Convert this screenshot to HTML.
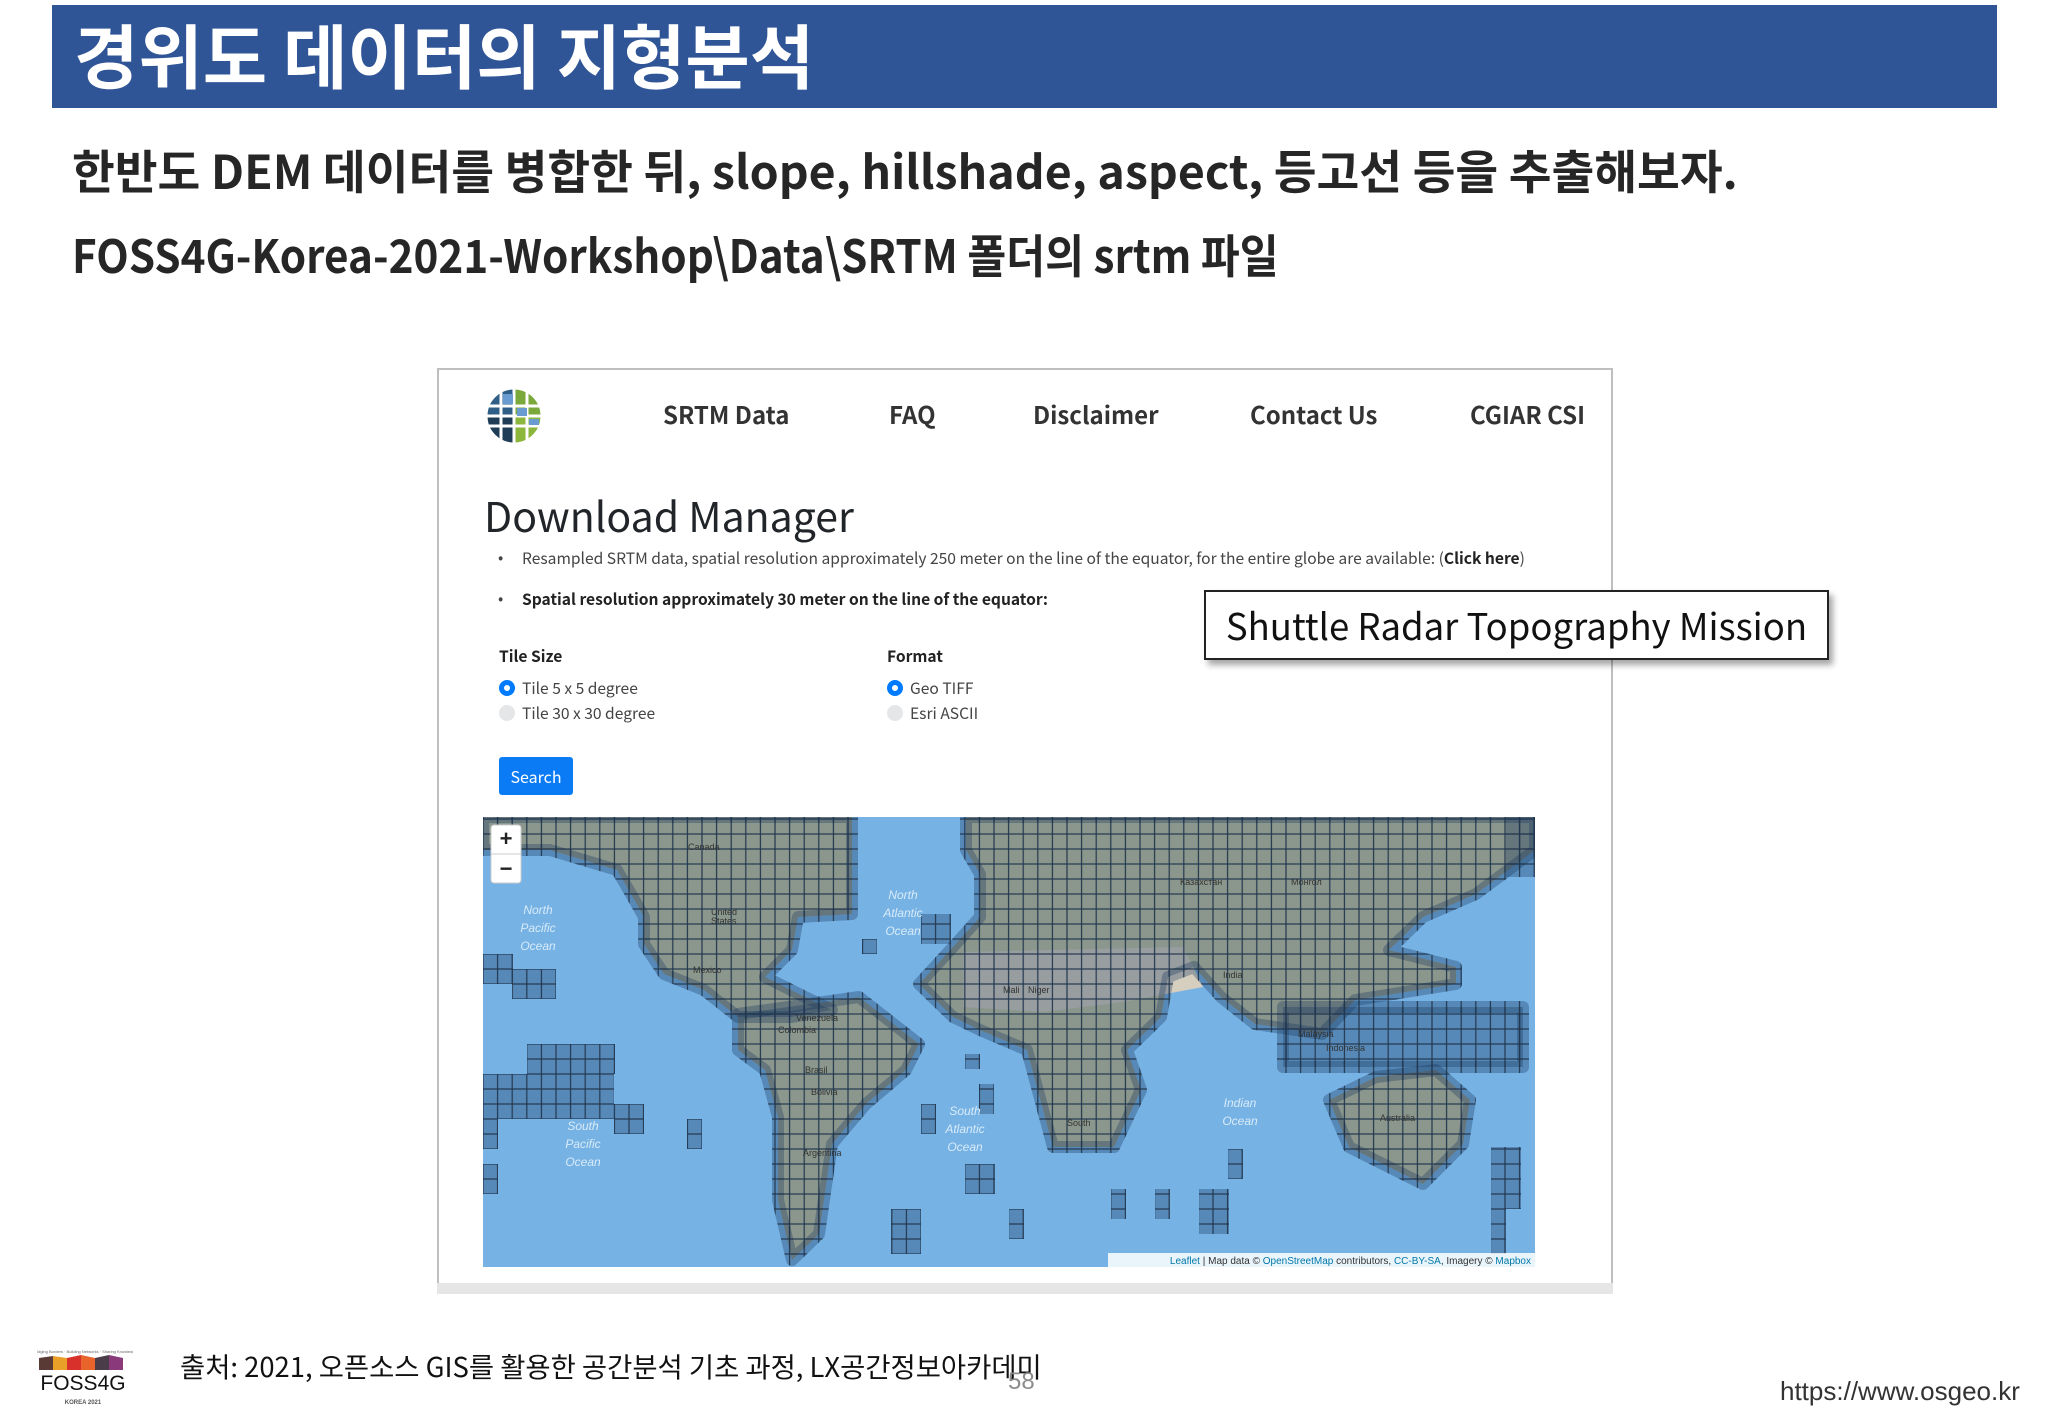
<!DOCTYPE html>
<html><head><meta charset="utf-8"><style>
*{margin:0;padding:0;box-sizing:border-box}
body{width:2048px;height:1418px;background:#fff;position:relative;overflow:hidden;font-family:"Liberation Sans","Noto Sans CJK KR",sans-serif}
.abs{position:absolute;white-space:nowrap}
.hdr{left:52px;top:5px;width:1945px;height:103px;background:#2f5597}
.kr{font-family:"Noto Sans CJK KR","Liberation Sans",sans-serif}
.title{left:74px;top:10px;font-size:70px;font-weight:700;color:#fff;line-height:88px}
.l2{left:72px;top:138px;font-size:46.5px;font-weight:700;color:#262626;line-height:64px}
.l3{left:72px;top:222px;font-size:46px;font-weight:700;color:#262626;line-height:64px;transform:scaleX(0.918);transform-origin:0 0}
.box{left:437px;top:368px;width:1176px;height:926px;border:2px solid #bfbfbf;background:#fff}
.nav{top:396px;font-size:24px;font-weight:700;color:#333;font-family:"Noto Sans CJK KR","Liberation Sans",sans-serif}
.dm{left:484px;top:486px;font-size:41px;color:#212529;font-family:"Noto Sans CJK KR",sans-serif;line-height:56px}
.sm{font-size:15.6px;color:#444;font-family:"Noto Sans CJK KR",sans-serif;line-height:22px}
.radio{width:16px;height:16px;border-radius:50%}
.on{border:5px solid #007bff;background:#fff}
.off{background:#e4e6e8}
.btn{left:499px;top:757px;width:74px;height:38px;background:#0a7bf5;border-radius:3px;color:#fff;font-size:16px;text-align:center;line-height:38px;font-family:"Noto Sans CJK KR",sans-serif}
.call{left:1204px;top:590px;width:625px;height:70px;border:2px solid #222;background:#fff;box-shadow:4px 5px 6px rgba(0,0,0,.35);font-size:36.5px;color:#111;text-align:center;line-height:66px;font-family:"Noto Sans CJK KR",sans-serif}
</style></head><body>
<div class="abs hdr"></div>
<div class="abs title kr">경위도 데이터의 지형분석</div>
<div class="abs l2 kr">한반도 DEM 데이터를 병합한 뒤, slope, hillshade, aspect, 등고선 등을 추출해보자.</div>
<div class="abs l3 kr">FOSS4G-Korea-2021-Workshop\Data\SRTM 폴더의 srtm 파일</div>

<div class="abs box"></div>
<div class="abs" style="left:437px;top:1283px;width:1176px;height:11px;background:#e6e6e6"></div>
<svg class="abs" style="left:483px;top:386px" width="64" height="60" viewBox="0 0 64 60">
<circle cx="31" cy="30" r="28" fill="#fff"/>
<g stroke="#fff" stroke-width="3">
<path d="M3 30 A28 28 0 0 1 31 2 L31 30Z" fill="#2f5f86"/>
<path d="M31 2 A28 28 0 0 1 59 30 L31 30Z" fill="#7aa83a"/>
<path d="M59 30 A28 28 0 0 1 31 58 L31 30Z" fill="#8db63c"/>
<path d="M31 58 A28 28 0 0 1 3 30 L31 30Z" fill="#1f3d57"/>
<path d="M3 20 H59 M3 40 H59 M18 3 V57 M44 3 V57" fill="none"/>
</g>
<rect x="34" y="22" width="10" height="8" fill="#6a9bd1"/><rect x="20" y="8" width="10" height="10" fill="#6a9bd1"/><rect x="46" y="33" width="10" height="6" fill="#6a9bd1"/>
</svg>
<div class="abs nav" style="left:663px">SRTM Data</div>
<div class="abs nav" style="left:889px">FAQ</div>
<div class="abs nav" style="left:1033px">Disclaimer</div>
<div class="abs nav" style="left:1250px">Contact Us</div>
<div class="abs nav" style="left:1470px">CGIAR CSI</div>
<div class="abs dm">Download Manager</div>
<div class="abs sm" style="left:498px;top:546px">•</div>
<div class="abs sm" style="left:522px;top:547px">Resampled SRTM data, spatial resolution approximately 250 meter on the line of the equator, for the entire globe are available: (<b style="color:#222">Click here</b>)</div>
<div class="abs sm" style="left:498px;top:587px">•</div>
<div class="abs sm" style="left:522px;top:588px;font-weight:700;color:#222">Spatial resolution approximately 30 meter on the line of the equator:</div>
<div class="abs sm" style="left:499px;top:645px;font-weight:700;color:#222">Tile Size</div>
<div class="abs sm" style="left:887px;top:645px;font-weight:700;color:#222">Format</div>
<div class="abs radio on" style="left:499px;top:680px"></div>
<div class="abs sm" style="left:522px;top:677px">Tile 5 x 5 degree</div>
<div class="abs radio off" style="left:499px;top:705px"></div>
<div class="abs sm" style="left:522px;top:702px">Tile 30 x 30 degree</div>
<div class="abs radio on" style="left:887px;top:680px"></div>
<div class="abs sm" style="left:910px;top:677px">Geo TIFF</div>
<div class="abs radio off" style="left:887px;top:705px"></div>
<div class="abs sm" style="left:910px;top:702px">Esri ASCII</div>
<div class="abs btn">Search</div>

<svg class="abs" style="left:483px;top:817px" width="1052" height="450" viewBox="0 0 1052 450">
<defs>
<pattern id="g" x="0" y="2" width="14.6" height="15" patternUnits="userSpaceOnUse">
<rect width="14.6" height="15" fill="rgba(25,55,95,0.33)" stroke="#22374f" stroke-width="1.2"/>
</pattern>
</defs>
<rect width="1052" height="450" fill="#76b2e4"/>
<g fill="#c4c7a3">
<polygon points="134,0 369,0 369,97 315,100 309,133 282,160 322,180 349,193 309,200 255,200 221,173 181,157 161,127 161,100 148,77 134,53 67,33 0,33 0,0"/>
<polygon points="255,197 376,180 436,227 423,253 383,287 349,327 336,417 309,443 295,383 295,300 282,253 255,233"/>
<polygon points="483,0 1052,0 1052,33 993,77 940,100 906,133 973,150 973,167 872,183 839,217 772,207 738,180 711,150 685,160 678,200 644,233 658,273 631,330 570,330 544,233 497,213 470,200 436,167 470,130 497,100 497,57 483,33"/>
<polygon points="846,283 893,260 953,253 987,283 980,327 940,367 866,330"/>
</g>
<polygon points="480,135 700,130 720,170 640,185 560,195 480,190" fill="#d6cfc0"/>
<g fill="url(#g)" stroke="url(#g)" stroke-width="12" stroke-linejoin="round">
<polygon points="134,0 369,0 369,97 315,100 309,133 282,160 322,180 349,193 309,200 255,200 221,173 181,157 161,127 161,100 148,77 134,53 67,33 0,33 0,0"/>
<polygon points="255,197 376,180 436,227 423,253 383,287 349,327 336,417 309,443 295,383 295,300 282,253 255,233"/>
<polygon points="483,0 1052,0 1052,33 993,77 940,100 906,133 973,150 973,167 872,183 839,217 772,207 738,180 711,150 685,160 678,200 644,233 658,273 631,330 570,330 544,233 497,213 470,200 436,167 470,130 497,100 497,57 483,33"/>
<polygon points="846,283 893,260 953,253 987,283 980,327 940,367 866,330"/>
<polygon points="800,190 1040,190 1040,250 800,250"/>
</g>
<g fill="url(#g)">
<rect x="0" y="257" width="131" height="45"/><rect x="44" y="227" width="88" height="30"/>
<rect x="0" y="137" width="30" height="30"/><rect x="29" y="152" width="44" height="30"/>
<rect x="0" y="302" width="15" height="30"/><rect x="0" y="347" width="15" height="30"/>
<rect x="131" y="287" width="30" height="30"/><rect x="204" y="302" width="15" height="30"/>
<rect x="379" y="122" width="15" height="15"/><rect x="438" y="97" width="30" height="30"/>
<rect x="482" y="237" width="15" height="15"/><rect x="496" y="267" width="15" height="30"/>
<rect x="438" y="287" width="15" height="30"/><rect x="482" y="347" width="30" height="30"/>
<rect x="526" y="392" width="15" height="30"/><rect x="628" y="372" width="15" height="30"/>
<rect x="672" y="372" width="15" height="30"/><rect x="716" y="372" width="30" height="45"/>
<rect x="745" y="332" width="15" height="30"/><rect x="1008" y="392" width="15" height="45"/>
<rect x="408" y="392" width="30" height="45"/><rect x="1008" y="330" width="30" height="62"/>
<rect x="1023" y="0" width="29" height="60"/>
</g>
<rect x="8" y="8" width="30" height="58" rx="3" fill="#fff" stroke="#ccc"/>
<line x1="8" y1="37" x2="38" y2="37" stroke="#ccc"/>
<text x="23" y="29" font-size="22" font-family="Liberation Sans" font-weight="700" text-anchor="middle" fill="#222">+</text>
<text x="23" y="59" font-size="22" font-family="Liberation Sans" font-weight="700" text-anchor="middle" fill="#222">−</text>
<g font-family="Liberation Sans" font-size="12" fill="#d8ebf8" font-style="italic" text-anchor="middle">
<text x="55" y="97">North</text><text x="55" y="115">Pacific</text><text x="55" y="133">Ocean</text>
<text x="420" y="82">North</text><text x="420" y="100">Atlantic</text><text x="420" y="118">Ocean</text>
<text x="100" y="313">South</text><text x="100" y="331">Pacific</text><text x="100" y="349">Ocean</text>
<text x="482" y="298">South</text><text x="482" y="316">Atlantic</text><text x="482" y="334">Ocean</text>
<text x="757" y="290">Indian</text><text x="757" y="308">Ocean</text>
</g>
<g font-family="Liberation Sans" font-size="9" fill="#333">
<text x="205" y="33">Canada</text><text x="228" y="98">United</text><text x="228" y="107">States</text>
<text x="210" y="156">Mexico</text><text x="313" y="204">Venezuela</text><text x="295" y="216">Colombia</text>
<text x="322" y="256">Brasil</text><text x="328" y="278">Bolivia</text><text x="320" y="339">Argentina</text>
<text x="697" y="68">Казахстан</text><text x="808" y="68">Монгол</text><text x="740" y="161">India</text>
<text x="815" y="220">Malaysia</text><text x="843" y="234">Indonesia</text><text x="897" y="304">Australia</text>
<text x="520" y="176">Mali</text><text x="545" y="176">Niger</text><text x="584" y="309">South</text>
</g>
<rect x="625" y="436" width="427" height="14" fill="rgba(255,255,255,0.85)"/>
<text x="1048" y="447" font-family="Liberation Sans" font-size="10" fill="#333" text-anchor="end"><tspan fill="#0078a8">Leaflet</tspan> | Map data © <tspan fill="#0078a8">OpenStreetMap</tspan> contributors, <tspan fill="#0078a8">CC-BY-SA</tspan>, Imagery © <tspan fill="#0078a8">Mapbox</tspan></text>
</svg>

<div class="abs call">Shuttle Radar Topography Mission</div>

<svg class="abs" style="left:37px;top:1348px" width="96" height="62" viewBox="0 0 96 62">
<text x="48" y="5" font-size="4" text-anchor="middle" fill="#666" font-family="Liberation Sans">Bridging Borders · Building Networks · Sharing Knowledge</text>
<polygon points="2,10 16,8 16,22 2,22" fill="#5a3a34"/>
<polygon points="16,8 30,10 30,22 16,22" fill="#e8a028"/>
<polygon points="30,10 44,7 44,22 30,22" fill="#d8302a"/>
<polygon points="44,7 58,10 58,22 44,22" fill="#e8642a"/>
<polygon points="58,10 72,7 72,22 58,22" fill="#4a3c48"/>
<polygon points="72,7 86,10 86,22 72,22" fill="#8a3a7a"/>
<text x="46" y="42" font-size="21" text-anchor="middle" fill="#111" font-family="Liberation Sans">FOSS4G</text>
<text x="46" y="56" font-size="6" text-anchor="middle" fill="#555" font-family="Liberation Sans" font-weight="700">KOREA 2021</text>
</svg>
<div class="abs kr" style="left:180px;top:1346px;font-size:27.4px;color:#111;line-height:38px">출처: 2021, 오픈소스 GIS를 활용한 공간분석 기초 과정, LX공간정보아카데미</div>
<div class="abs" style="left:1008px;top:1368px;font-size:24px;color:#8c8c8c">58</div>
<div class="abs" style="left:1780px;top:1376px;font-size:26px;color:#333">https://www.osgeo.kr</div>
</body></html>
